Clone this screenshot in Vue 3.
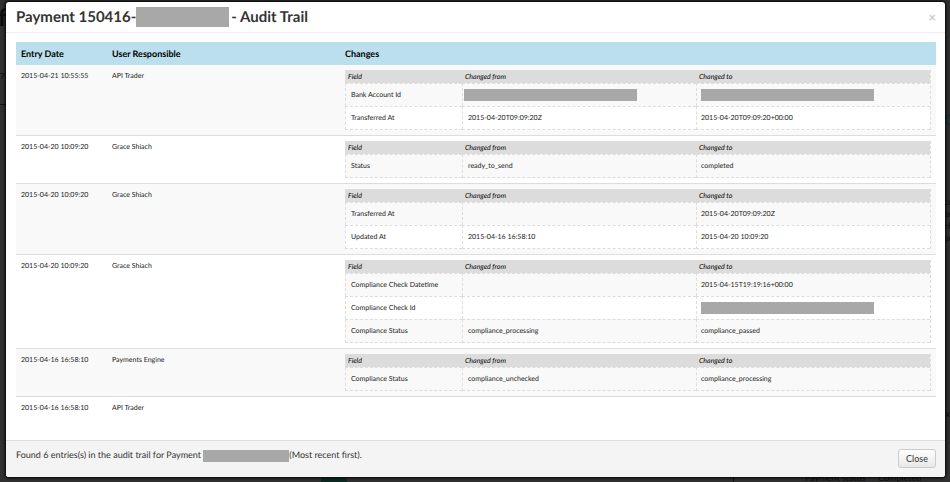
<script setup>
const entries = [
  {
    date: '2015-04-21 10:55:55',
    user: 'API Trader',
    changes: [
      { field: 'Bank Account Id', from: null, to: null },
      { field: 'Transferred At', from: '2015-04-20T09:09:20Z', to: '2015-04-20T09:09:20+00:00' },
    ],
  },
  {
    date: '2015-04-20 10:09:20',
    user: 'Grace Shiach',
    changes: [{ field: 'Status', from: 'ready_to_send', to: 'completed' }],
  },
  {
    date: '2015-04-20 10:09:20',
    user: 'Grace Shiach',
    changes: [
      { field: 'Transferred At', from: '', to: '2015-04-20T09:09:20Z' },
      { field: 'Updated At', from: '2015-04-16 16:58:10', to: '2015-04-20 10:09:20' },
    ],
  },
  {
    date: '2015-04-20 10:09:20',
    user: 'Grace Shiach',
    changes: [
      { field: 'Compliance Check Datetime', from: '', to: '2015-04-15T19:19:16+00:00' },
      { field: 'Compliance Check Id', from: '', to: null },
      { field: 'Compliance Status', from: 'compliance_processing', to: 'compliance_passed' },
    ],
  },
  {
    date: '2015-04-16 16:58:10',
    user: 'Payments Engine',
    changes: [
      { field: 'Compliance Status', from: 'compliance_unchecked', to: 'compliance_processing' },
    ],
  },
  { date: '2015-04-16 16:58:10', user: 'API Trader', changes: [] },
]
</script>

<template>
  <div class="backdrop">
    <!-- Dimmed page that shows around the edges of the dialog -->
    <div class="page" aria-hidden="true">
      <span class="bit page-title">f</span>
      <span class="bit page-cell">7-</span>
      <span class="bit page-rule"></span>
      <span class="bit page-link">C</span>
      <span class="bit page-side">cu<br>la<br>H<br>ur</span>
      <span class="bit page-x">x</span>
      <span class="bit page-tag"></span>
      <span class="bit page-divider"></span>
      <span class="bit page-status">Payment status</span>
      <span class="bit page-value">Completed</span>
    </div>

    <section class="modal" role="dialog" aria-labelledby="audit-title">
      <header class="modal-header">
        <h1 id="audit-title">Payment 150416-<span class="mask mask-title"></span>- Audit Trail</h1>
        <button class="dismiss" type="button" aria-label="Close dialog">×</button>
      </header>

      <div class="modal-body">
        <table class="audit">
          <thead>
            <tr>
              <th class="col-date">Entry Date</th>
              <th class="col-user">User Responsible</th>
              <th>Changes</th>
            </tr>
          </thead>
          <tbody>
            <tr v-for="(entry, i) in entries" :key="i">
              <td class="meta">{{ entry.date }}</td>
              <td class="meta">{{ entry.user }}</td>
              <td>
                <table v-if="entry.changes.length" class="changes">
                  <thead>
                    <tr>
                      <th class="col-field">Field</th>
                      <th>Changed from</th>
                      <th>Changed to</th>
                    </tr>
                  </thead>
                  <tbody>
                    <tr v-for="change in entry.changes" :key="change.field">
                      <td>{{ change.field }}</td>
                      <td :class="{ masked: change.from === null }">
                        <span v-if="change.from === null" class="mask mask-cell"></span>
                        <template v-else>{{ change.from }}</template>
                      </td>
                      <td>
                        <span v-if="change.to === null" class="mask mask-cell"></span>
                        <template v-else>{{ change.to }}</template>
                      </td>
                    </tr>
                  </tbody>
                </table>
              </td>
            </tr>
          </tbody>
        </table>
      </div>

      <footer class="modal-footer">
        <p>Found 6 entries(s) in the audit trail for Payment <span class="mask mask-note"></span>(Most recent first).</p>
        <button class="close" type="button">Close</button>
      </footer>
    </section>
  </div>
</template>

<style>
body {
  background: #303030;
}
</style>

<style scoped>
.backdrop {
  position: relative;
  box-sizing: border-box;
  min-height: 100vh;
  padding: 2px 5px 4px 6px;
  background: #303030;
  color: #333;
  font-family: Lato, "Liberation Sans", sans-serif;
  font-size: 9px;
  line-height: 12px;
  text-rendering: geometricPrecision;
}
.page {
  position: absolute;
  inset: 0;
  overflow: hidden;
  color: #0c0c0c;
}
.bit {
  position: absolute;
  white-space: nowrap;
}
.page-title {
  top: 4px;
  left: -2px;
  font-size: 24px;
  font-weight: 700;
  line-height: 28px;
}
.page-cell {
  top: 70px;
  left: 0;
  font-size: 8px;
}
.page-rule {
  top: 104px;
  left: 0;
  width: 6px;
  border-top: 1px solid #111;
}
.page-link {
  top: 114px;
  right: -4px;
  color: #0b2f3c;
  font-size: 15px;
}
.page-side {
  top: 196px;
  right: -3px;
}
.page-x {
  top: 408px;
  right: 0;
}
.page-tag {
  bottom: 0;
  left: 321px;
  width: 26px;
  height: 4px;
  background: #0c2a22;
}
.page-divider {
  bottom: 0;
  left: 733px;
  height: 5px;
  border-left: 1px solid #111;
}
.page-status {
  bottom: -2px;
  left: 805px;
}
.page-value {
  bottom: -2px;
  left: 878px;
}
.modal {
  position: relative;
  overflow: hidden;
  border-radius: 3px;
  background: #fff;
  box-shadow: 0 0 3px 1px #000;
}
.modal-header {
  display: flex;
  align-items: center;
  justify-content: space-between;
  height: 30px;
  padding: 0 9px 0 10px;
  border-bottom: 1px solid #eee;
}
h1 {
  display: flex;
  align-items: center;
  margin: 0;
  font-size: 15px;
  font-weight: 700;
  line-height: 20px;
}
.mask {
  display: inline-block;
  background: #a8a8a8;
}
.mask-title {
  width: 93px;
  height: 20px;
  margin-right: 2px;
}
.mask-cell {
  display: block;
  width: 173px;
  height: 12px;
}
.mask-note {
  width: 86px;
  height: 12px;
  vertical-align: middle;
}
.dismiss {
  padding: 0;
  border: 0;
  background: none;
  color: #ccc;
  font: 700 13px/16px Lato, sans-serif;
}
.modal-body {
  padding: 9px 9px 0 10px;
}
table {
  width: 100%;
  border-collapse: separate;
  border-spacing: 0;
  table-layout: fixed;
}
th {
  text-align: left;
}
.audit > thead th {
  height: 23px;
  padding: 0 5px;
  background: #bbdfed;
  color: #000;
  font-size: 9px;
  font-weight: 700;
}
.col-date {
  width: 81px;
}
.col-user {
  width: 223px;
}
.audit > tbody > tr > td {
  height: 33px;
  padding: 5px;
  border-top: 1px solid #ddd;
  vertical-align: top;
}
.audit > tbody > tr:first-child > td {
  border-top: 0;
}
.audit > tbody > tr:nth-child(odd) > td {
  background: #f9f9f9;
}
.audit > tbody > tr:nth-child(even) > td,
.audit > tbody > tr:last-child > td {
  background: #fff;
}
.audit .meta {
  color: #222;
  font-size: 7px;
}
.changes {
  border-right: 1px dashed #ddd;
}
.changes th {
  height: 13px;
  padding: 0 3px;
  background: #dcdcdc;
  color: #000;
  font-size: 7px;
  font-style: italic;
  font-weight: 400;
}
.changes .col-field {
  width: 111px;
}
.changes td {
  height: 22px;
  padding: 0 5px;
  border-top: 1px dashed #ddd;
  border-left: 1px dashed #ddd;
  color: #222;
  font-size: 7px;
}
.changes .masked:nth-child(2) {
  padding-left: 1px;
}
.changes td:last-child {
  padding-left: 4px;
}
.changes tr:last-child td {
  border-bottom: 1px dashed #ddd;
}
.changes tbody tr:nth-child(odd) {
  background: #f9f9f9;
}
.changes tbody tr:nth-child(even) {
  background: #fff;
}
.modal-footer {
  display: flex;
  justify-content: space-between;
  align-items: flex-start;
  height: 28px;
  padding: 8px 9px 0 10px;
  border-top: 1px solid #ddd;
  background: #f4f4f4;
}
.modal-footer p {
  margin: 0;
}
.close {
  height: 19px;
  padding: 0 7px;
  border: 1px solid #ccc;
  border-radius: 3px;
  background: linear-gradient(#fff, #e8e8e8);
  color: #333;
  font: 9px/12px Lato, sans-serif;
}
</style>
